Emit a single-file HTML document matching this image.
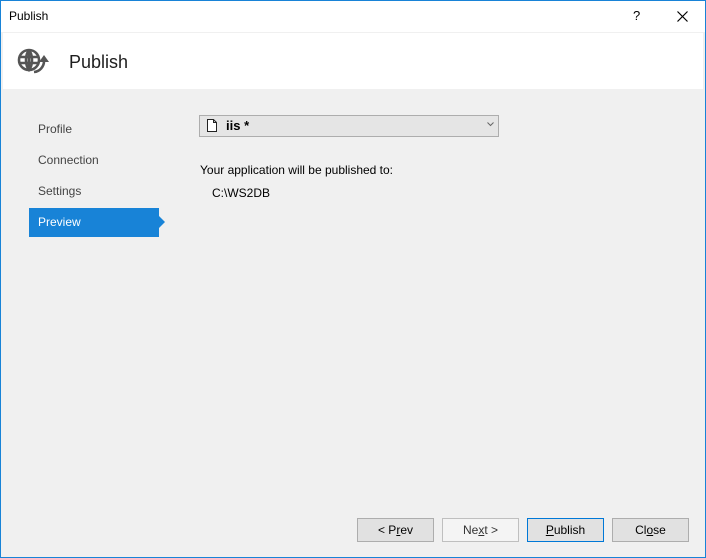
<!DOCTYPE html>
<html><head><style>
body{margin:0;width:706px;height:558px;overflow:hidden;font-family:"Liberation Sans",sans-serif;font-size:12px;color:#000}
.win{position:absolute;left:0;top:0;width:704px;height:556px;border:1px solid #1883d7;background:#f0f0f0}
.title{position:absolute;left:0;top:0;width:704px;height:31px;background:#fff}
.hdr{position:absolute;left:2px;top:32px;width:700px;height:56px;background:#fff}
.t{position:absolute;white-space:nowrap}
.nav{position:absolute;left:37px;color:#444}
.sel{position:absolute;left:28px;top:207px;width:130px;height:29px;background:#1883d7}
.sel:after{content:"";position:absolute;left:130px;top:8px;border:6px solid transparent;border-left-color:#1883d7;border-right:0}
.btn{position:absolute;top:517px;width:75px;height:22px;border:1px solid #adadad;background:#e1e1e1;text-align:center;line-height:22px}
</style></head><body><div class="win">
<div class="title"><span class="t" style="left:8px;top:8px">Publish</span>
<span class="t" style="left:632px;top:7px;font-size:13px">?</span>
<svg style="position:absolute;left:676px;top:10px" width="11" height="11"><path d="M0.5 0.5L10.5 10.5M10.5 0.5L0.5 10.5" stroke="#000" stroke-width="1.2"/></svg></div>
<div class="hdr">
<svg style="position:absolute;left:14px;top:13px" width="34" height="32" viewBox="0 0 34 32"><g fill="none" stroke="#555" stroke-width="2.6"><circle cx="12" cy="14" r="10"/><path d="M12 4C8 9 8 19 12 24C16 19 16 9 12 4"/><path d="M2 11H22M2 17H22M12 4V24"/></g><path d="M17 26A11 11 0 0 0 27 15" fill="none" stroke="#555" stroke-width="2.6"/><path d="M22 16L27 9L32 16Z" fill="#555"/></svg>
<span class="t" style="left:66px;top:19px;font-size:18px;color:#1e1e1e">Publish</span></div>
<span class="nav t" style="top:121px">Profile</span>
<span class="nav t" style="top:152px">Connection</span>
<span class="nav t" style="top:183px">Settings</span>
<div class="sel"></div>
<span class="t" style="left:37px;top:214px;color:#fff">Preview</span>
<div style="position:absolute;left:198px;top:114px;width:298px;height:20px;border:1px solid #adadad;background:#e5e5e5"></div>
<svg style="position:absolute;left:206px;top:118px" width="10" height="13"><path d="M0.5 0.5H6.5L9.5 3.5V12.5H0.5Z M6.5 0.5V3.5H9.5" fill="#fff" stroke="#222"/></svg>
<span class="t" style="left:225px;top:117px;font-weight:bold;font-size:13px">iis *</span>
<svg style="position:absolute;left:486px;top:121px" width="7" height="5"><path d="M0.5 0.5L3.5 3.5L6.5 0.5" fill="none" stroke="#666"/></svg>
<span class="t" style="left:199px;top:162px">Your application will be published to:</span>
<span class="t" style="left:211px;top:185px">C:\WS2DB</span>
<div class="btn" style="left:356px"><span>&lt; P<u>r</u>ev</span></div>
<div class="btn" style="left:441px;background:#f4f4f4;border-color:#bfbfbf;color:#333">Ne<u>x</u>t &gt;</div>
<div class="btn" style="left:526px;border-color:#0078d7"><u>P</u>ublish</div>
<div class="btn" style="left:611px">Cl<u>o</u>se</div>
</div></body></html>
